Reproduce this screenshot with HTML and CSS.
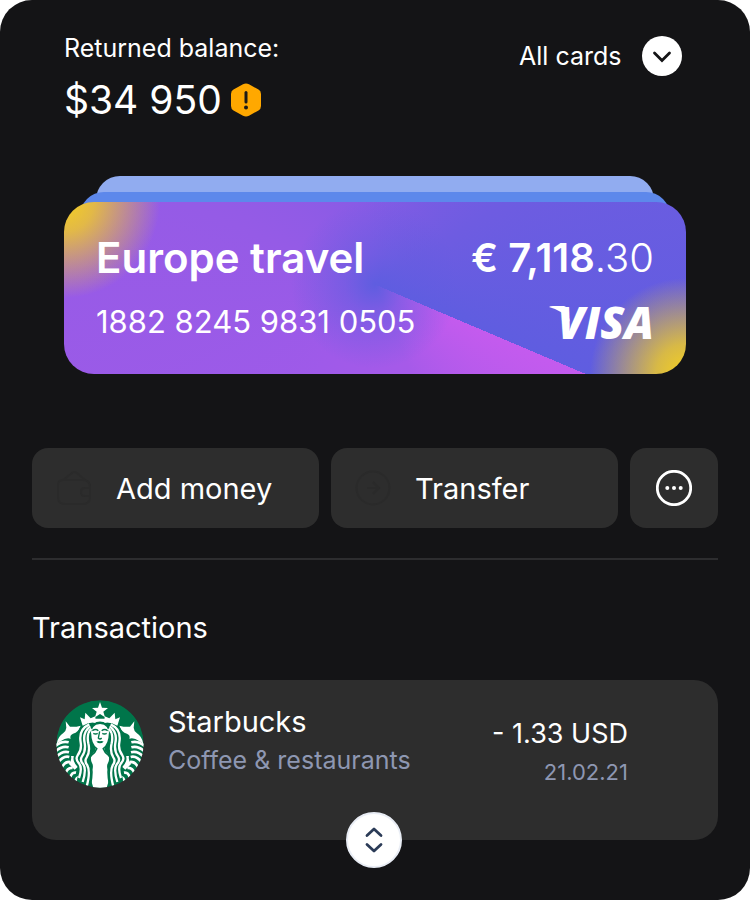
FILE: index.html
```html
<!DOCTYPE html>
<html lang="en">
<head>
<meta charset="utf-8">
<meta name="viewport" content="width=device-width, initial-scale=1">
<title>Balance</title>
<link rel="stylesheet" href="styles.css">
</head>
<body>
<main class="screen">
  <header class="header">
    <div class="balance">
      <p class="balance-label">Returned balance:</p>
      <p class="balance-amount">$34 950
        <svg class="alert" viewBox="0 0 32 34" aria-label="Attention"><path d="M13 1.200Q16-.4 19 1.200L28.500 6.600Q31 8 31 11V23Q31 26 28.500 27.400L19 32.800Q16 34.400 13 32.800L3.500 27.400Q1 26 1 23V11Q1 8 3.500 6.600Z" fill="#ffa800"/><path d="M16 9.500V19" stroke="#1c1a16" stroke-width="3" stroke-linecap="round"/><circle cx="16" cy="24.500" r="2" fill="#1c1a16"/></svg>
      </p>
    </div>
    <div class="filter">
      <select class="filter-select" aria-label="Cards"><option>All cards</option></select>
      <svg class="filter-icon" viewBox="0 0 40 40" aria-hidden="true"><circle cx="20" cy="20" r="20" fill="#fff"/><path d="M12.500 17L20 24.500L27.500 17" fill="none" stroke="#141416" stroke-width="2.800" stroke-linecap="round"/></svg>
    </div>
  </header>

  <section class="stack" aria-label="Cards">
    <div class="layer layer-back"></div>
    <div class="layer layer-middle"></div>
    <article class="card">
      <div class="card-row card-main"><h1 class="card-name">Europe travel</h1><p class="card-sum">€ 7,118<span class="cents">.30</span></p></div>
      <div class="card-row card-sub"><p class="card-number">1882 8245 9831 0505</p>
        <p class="visa"><svg class="visa-flick" viewBox="0 0 24 18" aria-hidden="true"><path d="M0 1Q1 0 4 0H15Q17 0 18 3L21 16Q16 5 0 1Z" fill="#fff"/></svg>VISA</p></div>
    </article>
  </section>

  <div class="actions">
    <button class="action" type="button">
      <svg class="action-icon" viewBox="0 0 36 36" aria-hidden="true"><path d="M7 10H27Q34 10 34 17V27Q34 34 27 34H9Q2 34 2 27V15Q2 10 7 10L16 3Q18 1 21 3L29 10M34 18H29Q25 18 25 22T29 26H34"/></svg>
      <span>Add money</span>
    </button>
    <button class="action" type="button">
      <svg class="action-icon" viewBox="0 0 36 36" aria-hidden="true"><circle cx="18" cy="18" r="16.500"/><path d="M12 18H24M18 12L24 18L18 24"/></svg>
      <span>Transfer</span>
    </button>
    <button class="action action-more" type="button" aria-label="More">
      <svg class="more-icon" viewBox="0 0 36 36" aria-hidden="true"><circle cx="18" cy="18" r="16.700" fill="none" stroke="#fff" stroke-width="2.800"/><g fill="#fff"><circle cx="11.300" cy="18" r="2"/><circle cx="18" cy="18" r="2"/><circle cx="24.700" cy="18" r="2"/></g></svg>
    </button>
  </div>
  <hr class="divider">

  <section>
    <h2 class="section-title">Transactions</h2>
    <div class="panel">
      <article class="transaction">
        <svg class="brand" viewBox="18 18 264 264" aria-label="Starbucks">
          <defs>
            <clipPath id="disc"><circle cx="150" cy="150" r="131"/></clipPath>
            <g id="side">
              <path fill="#fff" d="M47 82L60 98Q74 100 92 95Q86 114 69 119Q58 124 62 134Q48 130 33 141Q27 144 20 149Q24 127 40 117Q48 111 49 101Z"/>
              <g fill="none" stroke="#fff" stroke-width="8">
                <path d="M14 158Q34 139 56 145"/><path d="M14 175Q34 154 56 160"/><path d="M17 191Q36 169 57 175"/><path d="M23 207Q40 184 58 189"/><path d="M33 225Q43 202 60 204"/><path d="M46 240Q52 220 68 222"/><path d="M60 254Q64 233 78 236"/><path d="M76 266Q78 248 89 249"/>
              </g>
              <path fill="#fff" d="M63 186L80 186Q87 196 89 206Q85 220 74 227L56 209Q66 201 63 186Z"/>
              <path fill="none" stroke="#00754a" stroke-width="24" d="M120 90Q87 108 94 145Q98 168 86 184Q78 196 90 208Q104 222 92 262"/>
              <g fill="none" stroke="#fff" stroke-width="7">
                <path d="M118 91Q85 106 92 145Q96 168 83 184Q75 196 87 208Q98 222 87 252"/>
                <path d="M121 97Q97 114 104 147Q108 171 96 187Q88 199 100 211Q110 226 98 264"/>
                <path d="M124 104Q109 119 115 148Q121 173 110 190Q102 201 112 214Q122 232 110 278"/>
              </g>
              <path fill="#fff" d="M90 70L104 76L106 56L122 73L136 67L137 86Q119 83 98 95Z"/>
            </g>
          </defs>
          <g clip-path="url(#disc)">
            <circle cx="150" cy="150" r="132" fill="#00754a"/>
            <use href="#side"/><use href="#side" transform="matrix(-1 0 0 1 300 0)"/>
            <path fill="#fff" d="M150 24L156 41L174 42L160 53L165 70L150 60L135 70L140 53L126 42L144 41ZM134 74H166L170 87Q150 78 130 87Z"/>
            <path fill="#fff" d="M150 90Q177 91 178 125Q176 151 164 160L164 171Q184 186 174 207Q168 217 175 230Q181 254 169 284H131Q119 254 125 230Q132 217 126 207Q116 186 136 171L136 160Q124 151 122 125Q123 91 150 90Z"/>
            <path fill="none" stroke="#00754a" stroke-width="5" d="M121 118Q122 152 140 164Q137 174 124 184Q114 196 122 210Q130 228 121 276M179 118Q178 152 160 164Q163 174 176 184Q186 196 178 210Q170 228 179 276"/>
            <path fill="none" stroke="#00754a" stroke-width="4" d="M127 110Q137 103 145 110M155 110Q164 103 173 110M130 118Q137 122 143 118M157 118Q163 122 170 118M149 112L145 132Q150 138 155 132"/>
            <path fill="#00754a" d="M139 143Q145 139 150 142Q155 139 161 143Q150 153 139 143Z"/>
          </g>
        </svg>
        <div class="merchant"><h3 class="line-main">Starbucks</h3><p class="line-sub">Coffee &amp; restaurants</p></div>
        <div class="payment"><p class="payment-sum">- 1.33 USD</p><p class="payment-date">21.02.21</p></div>
      </article>
      <button class="expand" type="button" aria-label="Expand">
        <svg class="expand-icon" viewBox="0 0 20 30" aria-hidden="true"><path d="M3 10.500L10 4L17 10.500M3 19.500L10 26L17 19.500" fill="none" stroke="#2b3b57" stroke-width="2.800" stroke-linecap="round" stroke-linejoin="round"/></svg>
      </button>
    </div>
  </section>
</main>
</body>
</html>
```
FILE: styles.css
```css
* { box-sizing: border-box; }
body { margin: 0; background: #fff; color: #fff; font-family: Inter, "Liberation Sans", sans-serif; }
h1, h2, h3, p { margin: 0; font-weight: 400; }
svg { display: block; flex: none; }
button, select { font: inherit; color: inherit; border: 0; cursor: pointer; }

.screen { min-height: 100vh; padding: 30px 32px 60px; border-radius: 32px; background: #141416; }

.header { display: flex; justify-content: space-between; align-items: flex-start; padding: 0 36px 0 32px; }
.balance-label { font-size: 25px; line-height: 36px; }
.balance-amount { display: flex; align-items: center; gap: 8px; margin-top: 4px; font-size: 39px; line-height: 60px; }
.alert { width: 32px; height: 34px; }
.filter { position: relative; margin-top: 6px; }
.filter-select { height: 40px; padding: 0 60px 0 0; appearance: none; background: transparent; font-size: 25px; }
.filter-icon { position: absolute; top: 0; right: 0; width: 40px; height: 40px; pointer-events: none; }

.stack { margin: 46px 32px 0; }
.layer { height: 40px; border-radius: 24px 24px 0 0; }
.layer-back { margin: 0 32px -24px; background: #91acf0; }
.layer-middle { margin: 0 16px -30px; background: #5d88eb; }
.card {
  padding: 28px 32px;
  border-radius: 30px;
  background:
    radial-gradient(circle at 0 0, #f5d020 0, #f5d020cc 30px, #f5d02000 96px),
    radial-gradient(circle at 100% 100%, #f5d020 0, #f5d020cc 30px, #f5d02000 96px),
    radial-gradient(circle at 50% 48%, #5f5de0 0, #5f5de088 30px, #5f5de000 84px),
    conic-gradient(from 113deg at 50% 48%, #c45bee 0deg, #a65ae9 45deg, #9f5ae9 100deg, #955be6 180deg, #885be5 240deg, #6e5ce1 305deg, #5f5de0 360deg);
}
.card-row { display: flex; justify-content: space-between; align-items: center; }
.card-main { font-size: 40px; line-height: 56px; }
.card-name { font-size: 42px; font-weight: 600; }
.card-sum { font-weight: 600; }
.cents { font-weight: 300; }
.card-sub { margin-top: 12px; line-height: 48px; }
.card-number { font-size: 31px; }
.visa { position: relative; font-family: "Open Sans", sans-serif; font-size: 44px; font-weight: 800; font-style: italic; }
.visa-flick { position: absolute; top: 8px; left: -8px; width: 24px; height: 18px; }

.actions { display: grid; grid-template-columns: 1fr 1fr 88px; gap: 12px; margin-top: 74px; }
.action { display: flex; align-items: center; gap: 24px; height: 80px; padding: 0 24px; border-radius: 16px; background: #2d2d2d; font-size: 29px; }
.action-icon { width: 36px; height: 36px; fill: none; stroke: #2a2a2a; stroke-width: 2; }
.action-more { justify-content: center; }
.more-icon { width: 36px; height: 36px; }

.divider { height: 2px; margin: 30px 0 0; border: 0; background: #2d2d2f; }
.section-title { margin-top: 48px; font-size: 29px; line-height: 40px; }
.panel { position: relative; margin-top: 32px; padding: 20px 90px 48px 24px; border-radius: 24px; background: #2d2d2d; }
.transaction { display: flex; align-items: flex-start; gap: 24px; min-height: 92px; }
.brand { width: 88px; height: 88px; }
.merchant { flex: 1; padding-top: 3px; }
.payment { padding-top: 15px; text-align: right; line-height: 38px; }
.line-main { font-size: 29px; line-height: 38px; }
.line-sub { font-size: 25px; line-height: 38px; color: #8e97b2; }
.payment-sum { font-size: 27px; }
.payment-date { font-size: 22px; color: #8e97b2; }
.expand { position: absolute; left: calc(50% - 29px); bottom: -28px; display: grid; place-items: center; width: 56px; height: 56px; padding: 0; border: 2px solid #e9edf5; border-radius: 50%; background: #fff; }
.expand-icon { width: 20px; height: 30px; }
```
